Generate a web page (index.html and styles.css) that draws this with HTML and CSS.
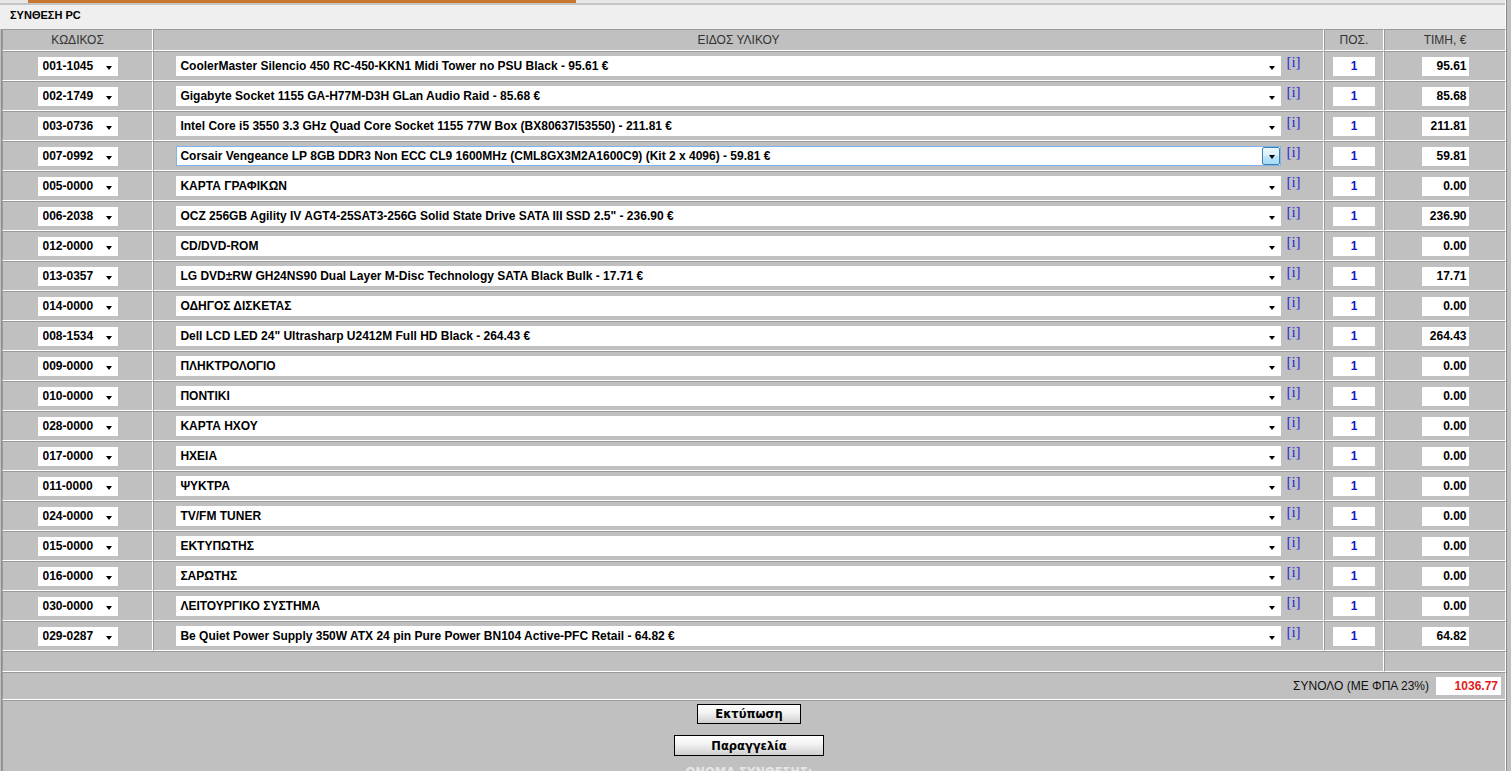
FILE: index.html
```html
<!DOCTYPE html>
<html lang="el">
<head>
    <meta charset="UTF-8">
    <title>ΣΥΝΘΕΣΗ PC</title>
    <link rel="stylesheet" href="styles.css">
</head>
<body>
<div class="page">
    <div class="tabs"><div class="tab"></div></div>
    <div class="title">ΣΥΝΘΕΣΗ PC</div>

    <table class="sheet">
        <colgroup>
            <col class="c-code">
            <col class="c-desc">
            <col class="c-qty">
            <col class="c-price">
        </colgroup>
        <tr class="head">
            <td>ΚΩΔΙΚΟΣ</td>
            <td>ΕΙΔΟΣ ΥΛΙΚΟΥ</td>
            <td>ΠΟΣ.</td>
            <td>ΤΙΜΗ, €</td>
        </tr>

        <tr class="item">
            <td><span class="dd code"><select><option>001-1045</option></select></span></td>
            <td><div class="desc"><span class="dd wide"><select><option>CoolerMaster Silencio 450 RC-450-KKN1 Midi Tower no PSU Black - 95.61 €</option></select></span><a class="info" href="#">[i]</a></div></td>
            <td><input class="qty" type="text" value="1"></td>
            <td><input class="price" type="text" value="95.61"></td>
        </tr>
        <tr class="item">
            <td><span class="dd code"><select><option>002-1749</option></select></span></td>
            <td><div class="desc"><span class="dd wide"><select><option>Gigabyte Socket 1155 GA-H77M-D3H GLan Audio Raid - 85.68 €</option></select></span><a class="info" href="#">[i]</a></div></td>
            <td><input class="qty" type="text" value="1"></td>
            <td><input class="price" type="text" value="85.68"></td>
        </tr>
        <tr class="item">
            <td><span class="dd code"><select><option>003-0736</option></select></span></td>
            <td><div class="desc"><span class="dd wide"><select><option>Intel Core i5 3550 3.3 GHz Quad Core Socket 1155 77W Box (BX80637I53550) - 211.81 €</option></select></span><a class="info" href="#">[i]</a></div></td>
            <td><input class="qty" type="text" value="1"></td>
            <td><input class="price" type="text" value="211.81"></td>
        </tr>
        <tr class="item">
            <td><span class="dd code"><select><option>007-0992</option></select></span></td>
            <td><div class="desc"><span class="dd wide hot"><select><option>Corsair Vengeance LP 8GB DDR3 Non ECC CL9 1600MHz (CML8GX3M2A1600C9) (Kit 2 x 4096) - 59.81 €</option></select></span><a class="info" href="#">[i]</a></div></td>
            <td><input class="qty" type="text" value="1"></td>
            <td><input class="price" type="text" value="59.81"></td>
        </tr>
        <tr class="item">
            <td><span class="dd code"><select><option>005-0000</option></select></span></td>
            <td><div class="desc"><span class="dd wide"><select><option>ΚΑΡΤΑ ΓΡΑΦΙΚΩΝ</option></select></span><a class="info" href="#">[i]</a></div></td>
            <td><input class="qty" type="text" value="1"></td>
            <td><input class="price" type="text" value="0.00"></td>
        </tr>
        <tr class="item">
            <td><span class="dd code"><select><option>006-2038</option></select></span></td>
            <td><div class="desc"><span class="dd wide"><select><option>OCZ 256GB Agility IV AGT4-25SAT3-256G Solid State Drive SATA III SSD 2.5" - 236.90 €</option></select></span><a class="info" href="#">[i]</a></div></td>
            <td><input class="qty" type="text" value="1"></td>
            <td><input class="price" type="text" value="236.90"></td>
        </tr>
        <tr class="item">
            <td><span class="dd code"><select><option>012-0000</option></select></span></td>
            <td><div class="desc"><span class="dd wide"><select><option>CD/DVD-ROM</option></select></span><a class="info" href="#">[i]</a></div></td>
            <td><input class="qty" type="text" value="1"></td>
            <td><input class="price" type="text" value="0.00"></td>
        </tr>
        <tr class="item">
            <td><span class="dd code"><select><option>013-0357</option></select></span></td>
            <td><div class="desc"><span class="dd wide"><select><option>LG DVD±RW GH24NS90 Dual Layer M-Disc Technology SATA Black Bulk - 17.71 €</option></select></span><a class="info" href="#">[i]</a></div></td>
            <td><input class="qty" type="text" value="1"></td>
            <td><input class="price" type="text" value="17.71"></td>
        </tr>
        <tr class="item">
            <td><span class="dd code"><select><option>014-0000</option></select></span></td>
            <td><div class="desc"><span class="dd wide"><select><option>ΟΔΗΓΟΣ ΔΙΣΚΕΤΑΣ</option></select></span><a class="info" href="#">[i]</a></div></td>
            <td><input class="qty" type="text" value="1"></td>
            <td><input class="price" type="text" value="0.00"></td>
        </tr>
        <tr class="item">
            <td><span class="dd code"><select><option>008-1534</option></select></span></td>
            <td><div class="desc"><span class="dd wide"><select><option>Dell LCD LED 24" Ultrasharp U2412M Full HD Black - 264.43 €</option></select></span><a class="info" href="#">[i]</a></div></td>
            <td><input class="qty" type="text" value="1"></td>
            <td><input class="price" type="text" value="264.43"></td>
        </tr>
        <tr class="item">
            <td><span class="dd code"><select><option>009-0000</option></select></span></td>
            <td><div class="desc"><span class="dd wide"><select><option>ΠΛΗΚΤΡΟΛΟΓΙΟ</option></select></span><a class="info" href="#">[i]</a></div></td>
            <td><input class="qty" type="text" value="1"></td>
            <td><input class="price" type="text" value="0.00"></td>
        </tr>
        <tr class="item">
            <td><span class="dd code"><select><option>010-0000</option></select></span></td>
            <td><div class="desc"><span class="dd wide"><select><option>ΠΟΝΤΙΚΙ</option></select></span><a class="info" href="#">[i]</a></div></td>
            <td><input class="qty" type="text" value="1"></td>
            <td><input class="price" type="text" value="0.00"></td>
        </tr>
        <tr class="item">
            <td><span class="dd code"><select><option>028-0000</option></select></span></td>
            <td><div class="desc"><span class="dd wide"><select><option>ΚΑΡΤΑ ΗΧΟΥ</option></select></span><a class="info" href="#">[i]</a></div></td>
            <td><input class="qty" type="text" value="1"></td>
            <td><input class="price" type="text" value="0.00"></td>
        </tr>
        <tr class="item">
            <td><span class="dd code"><select><option>017-0000</option></select></span></td>
            <td><div class="desc"><span class="dd wide"><select><option>ΗΧΕΙΑ</option></select></span><a class="info" href="#">[i]</a></div></td>
            <td><input class="qty" type="text" value="1"></td>
            <td><input class="price" type="text" value="0.00"></td>
        </tr>
        <tr class="item">
            <td><span class="dd code"><select><option>011-0000</option></select></span></td>
            <td><div class="desc"><span class="dd wide"><select><option>ΨΥΚΤΡΑ</option></select></span><a class="info" href="#">[i]</a></div></td>
            <td><input class="qty" type="text" value="1"></td>
            <td><input class="price" type="text" value="0.00"></td>
        </tr>
        <tr class="item">
            <td><span class="dd code"><select><option>024-0000</option></select></span></td>
            <td><div class="desc"><span class="dd wide"><select><option>TV/FM TUNER</option></select></span><a class="info" href="#">[i]</a></div></td>
            <td><input class="qty" type="text" value="1"></td>
            <td><input class="price" type="text" value="0.00"></td>
        </tr>
        <tr class="item">
            <td><span class="dd code"><select><option>015-0000</option></select></span></td>
            <td><div class="desc"><span class="dd wide"><select><option>ΕΚΤΥΠΩΤΗΣ</option></select></span><a class="info" href="#">[i]</a></div></td>
            <td><input class="qty" type="text" value="1"></td>
            <td><input class="price" type="text" value="0.00"></td>
        </tr>
        <tr class="item">
            <td><span class="dd code"><select><option>016-0000</option></select></span></td>
            <td><div class="desc"><span class="dd wide"><select><option>ΣΑΡΩΤΗΣ</option></select></span><a class="info" href="#">[i]</a></div></td>
            <td><input class="qty" type="text" value="1"></td>
            <td><input class="price" type="text" value="0.00"></td>
        </tr>
        <tr class="item">
            <td><span class="dd code"><select><option>030-0000</option></select></span></td>
            <td><div class="desc"><span class="dd wide"><select><option>ΛΕΙΤΟΥΡΓΙΚΟ ΣΥΣΤΗΜΑ</option></select></span><a class="info" href="#">[i]</a></div></td>
            <td><input class="qty" type="text" value="1"></td>
            <td><input class="price" type="text" value="0.00"></td>
        </tr>
        <tr class="item">
            <td><span class="dd code"><select><option>029-0287</option></select></span></td>
            <td><div class="desc"><span class="dd wide"><select><option>Be Quiet Power Supply 350W ATX 24 pin Pure Power BN104 Active-PFC Retail - 64.82 €</option></select></span><a class="info" href="#">[i]</a></div></td>
            <td><input class="qty" type="text" value="1"></td>
            <td><input class="price" type="text" value="64.82"></td>
        </tr>

        <tr class="spacer">
            <td colspan="3"></td>
            <td></td>
        </tr>
        <tr class="total">
            <td colspan="4">
                <div class="sum">
                    <span>ΣΥΝΟΛΟ (ΜΕ ΦΠΑ 23%)</span>
                    <input class="grand" type="text" value="1036.77">
                </div>
            </td>
        </tr>
        <tr class="actions">
            <td colspan="4">
                <button class="btn print">Εκτύπωση</button>
                <button class="btn order">Παραγγελία</button>
                <div class="name-label">ΟΝΟΜΑ ΣΥΝΘΕΣΗΣ:</div>
            </td>
        </tr>
    </table>
</div>
</body>
</html>
```

FILE: styles.css
```css
body {
    margin: 0;
    background-color: #c0c0c0;
    font-family: "Liberation Sans", Arial, sans-serif;
    font-size: 11px;
    color: #000;
    overflow: hidden;
}
.page {
    width: 1505px;
    border-right: 1px solid #fff;
    box-shadow: 1px 0 0 #8a8a8a;
}
.tabs {
    height: 3px;
    background-color: #e6e6e6;
    border-bottom: 2px solid #c4c4c4;
}
.tab {
    margin-left: 28px;
    width: 548px;
    height: 3px;
    background-color: #c9772f;
}
.title {
    height: 24px;
    line-height: 21px;
    padding-left: 10px;
    background-color: #efefef;
    font-weight: bold;
    font-size: 11px;
}

/* main grid */
.sheet {
    margin-left: 1px;
    width: 1504px;
    table-layout: fixed;
    border-spacing: 0;
    border-left: 1px solid #8e8e8e;
    background-color: #c0c0c0;
}
.c-code { width: 151px; }
.c-desc { width: 1171px; }
.c-qty { width: 60px; }
.c-price { width: 122px; }
.sheet td {
    padding: 0;
    border-top: 1px solid #9a9a9a;
    border-left: 1px solid #9a9a9a;
    border-right: 1px solid #fff;
    border-bottom: 1px solid #fff;
    text-align: center;
    vertical-align: middle;
}
.head td {
    height: 20px;
    color: #333;
    font-size: 12px;
}
.item td {
    height: 28px;
}
.spacer td {
    height: 19px;
}
.total td {
    height: 26px;
}

/* dropdowns */
.dd {
    position: relative;
    display: inline-block;
    vertical-align: top;
    background-color: #fff;
}
.dd select {
    display: block;
    width: 100%;
    height: 100%;
    margin: 0;
    padding: 0 0 0 4px;
    border: none;
    outline: none;
    background: transparent;
    appearance: none;
    -webkit-appearance: none;
    font-family: "Liberation Sans", Arial, sans-serif;
    font-weight: bold;
    font-size: 12px;
    color: #000;
}
.dd::after {
    content: "";
    position: absolute;
    right: 6px;
    bottom: 6px;
    border-left: 3px solid transparent;
    border-right: 3px solid transparent;
    border-top: 4px solid #000;
}
.dd.code {
    width: 80px;
    height: 19px;
}
.dd.code select {
    padding-left: 5px;
}
.dd.wide {
    width: 1105px;
    height: 20px;
}
.dd.hot {
    box-shadow: inset 0 0 0 1px #7eb4ea;
}
.dd.hot::before {
    content: "";
    position: absolute;
    top: 1px;
    right: 1px;
    width: 16px;
    height: 16px;
    border: 1px solid #3c7fb1;
    border-radius: 2px;
    background: linear-gradient(#eaf6fd, #d9f0fc 50%, #bee6fd 51%, #a7d9f5);
}
.dd.hot::after {
    right: 6px;
    bottom: 7px;
    z-index: 1;
}
.desc {
    display: flex;
    justify-content: center;
    align-items: flex-start;
    gap: 5px;
}
.info {
    font-family: "Liberation Serif", "Times New Roman", serif;
    font-size: 15px;
    line-height: 12px;
    color: #2b2bd8;
    text-decoration: none;
}

/* text fields */
input[type="text"] {
    margin: 0;
    padding: 0;
    border: none;
    outline: none;
    background-color: #fff;
    font-family: "Liberation Sans", Arial, sans-serif;
    font-weight: bold;
    font-size: 12px;
    vertical-align: middle;
}
.qty {
    width: 42px;
    height: 19px;
    text-align: center;
    color: #1515c8;
}
.price {
    width: 47px;
    height: 19px;
    padding-right: 2px !important;
    box-sizing: border-box;
    text-align: right;
    color: #000;
}

/* totals */
.sum {
    display: flex;
    justify-content: flex-end;
    align-items: center;
    gap: 7px;
    padding-right: 4px;
    font-size: 12px;
    color: #111;
}
.grand {
    width: 65px;
    height: 18px;
    padding-right: 3px !important;
    box-sizing: border-box;
    text-align: right;
    color: #e41b1b;
}

/* bottom buttons */
.actions td {
    height: 80px;
    vertical-align: top;
    padding: 3px 10px 0 0;
}
.btn {
    display: block;
    margin: 0 auto;
    padding: 0;
    border: 1px solid #000;
    background: linear-gradient(#ffffff, #f4f4f4 40%, #cfcfcf);
    font-family: "DejaVu Sans", Verdana, sans-serif;
    font-weight: bold;
    font-size: 11.5px;
    color: #000;
    cursor: pointer;
}
.btn.print {
    width: 104px;
    height: 20px;
}
.btn.order {
    width: 150px;
    height: 21px;
    margin-top: 11px;
}
.name-label {
    margin-top: 9px;
    font-family: "DejaVu Sans", Verdana, sans-serif;
    font-weight: bold;
    font-size: 11.5px;
    color: #e6e6e6;
}
```
